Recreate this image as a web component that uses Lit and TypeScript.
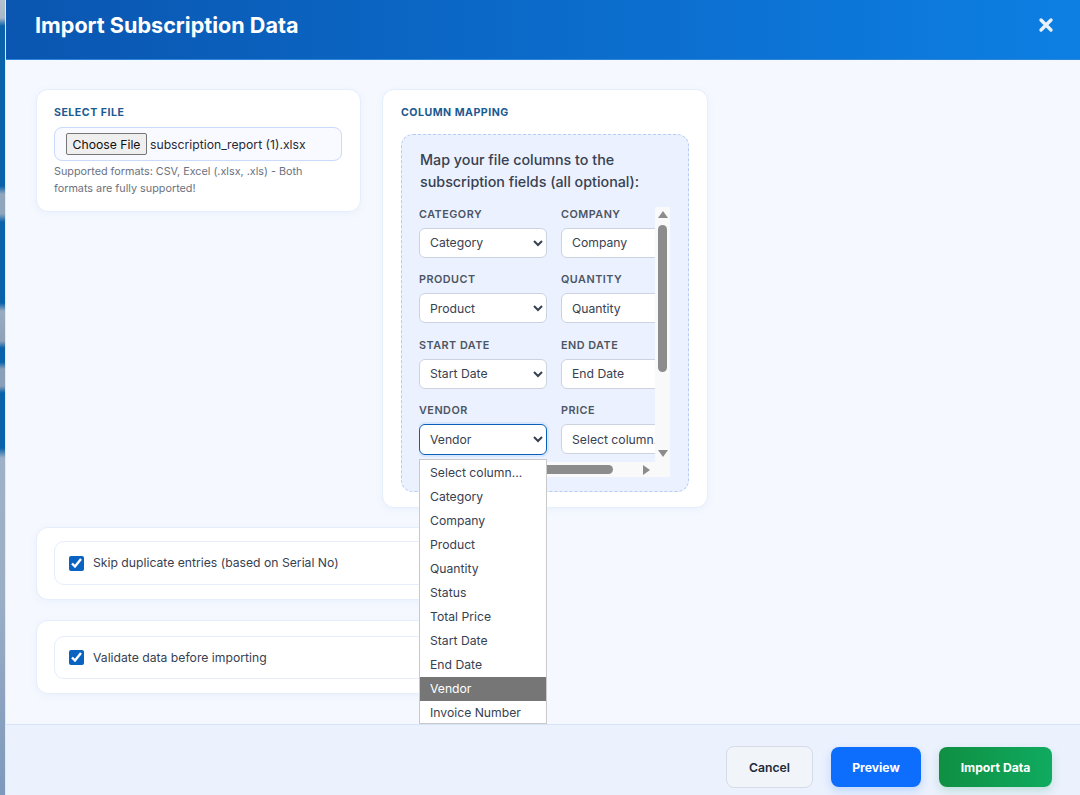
import { LitElement, html, css } from "lit";
import { customElement } from "lit/decorators.js";

const rows: [string, string, string, string][] = [
  ["Category", "Category", "Company", "Company"],
  ["Product", "Product", "Quantity", "Quantity"],
  ["Start Date", "Start Date", "End Date", "End Date"],
  ["Vendor", "Vendor", "Price", "Select column..."],
];
const options = ["Select column...", "Category", "Company", "Product", "Quantity", "Status", "Total Price", "Start Date", "End Date", "Vendor", "Invoice Number"];

@customElement("app-root")
export class AppRoot extends LitElement {
  static styles = css`
    :host { display: flex; height: 795px; width: 1080px; overflow: hidden; font-family: Inter, "Liberation Sans", sans-serif; color: #1f2937; }
    * { box-sizing: border-box; }
    .strip { width: 5px; flex: none; background: linear-gradient(180deg, #b4c0ce 0, #a8b8ca 18px, #0a62ab 26px, #0a62ab 186px, #8fa6bd 194px, #8fa6bd 214px, #0a62ab 222px, #0a62ab 303px, #98abc0 311px, #8fa2b8 341px, #0a62ab 348px, #0a62ab 362px, #8aa0b8 369px, #8aa0b8 386px, #0a62ab 393px, #0a62ab 448px, #9fb1c8 458px, #9aaec6 600px, #7d99bb 795px); }
    .modal { flex: 1; min-width: 0; display: flex; flex-direction: column; background: #f5f8ff; border-left: 1px solid #dfe8f8; }
    .header { height: 60px; flex: none; display: flex; align-items: center; justify-content: space-between; padding: 0 26px 9px 29px; background: linear-gradient(90deg, #0a56b0, #0d7fe3); border-bottom: 1px solid #2c86dc; }
    h1 { margin: 0; font-size: 21.6px; line-height: 30px; font-weight: 700; color: #fff; }
    .close { width: 16px; height: 16px; display: block; }
    .body { flex: 1; min-height: 0; padding: 29px 30px 0 31px; margin-left: -1px; position: relative; display: flex; flex-direction: column; }
    .top { display: flex; gap: 21px; align-items: flex-start; }
    .card { background: #fff; border: 1px solid #e6edfb; border-radius: 12px; box-shadow: 0 2px 8px rgba(13, 90, 180, .05); }
    .file-card { width: 325px; height: 123px; padding: 16px 18px 15px 17px; }
    .map-card { width: 326px; height: 419px; padding: 16px 18px 16px; }
    .title { font-size: 10.6px; line-height: 14px; font-weight: 700; letter-spacing: .5px; color: #1b5a91; text-transform: uppercase; margin-bottom: 7px; }
    .map-card .title { margin-bottom: 14px; }
    .file { height: 34px; display: flex; align-items: center; gap: 3px; padding-left: 11px; border: 1px solid #c9dafa; border-radius: 8px; background: #f8faff; font-size: 12.2px; color: #1f2937; }
    .choose { width: 81px; height: 22px; padding: 0; font: inherit; color: #111; background: #efefef; border: 1px solid #767676; border-radius: 2px; }
    .hint { margin-top: 2px; font-size: 10.8px; line-height: 17px; color: #6b7280; }
    .box { height: 358px; padding: 14px 18px 0; background: #ebf1fe; border: 1px dashed #b5cdf5; border-radius: 12px; }
    .intro { margin: 0 0 14px; font-size: 14.3px; line-height: 22px; font-weight: 500; color: #374151; }
    .scroll { width: 251px; height: 270px; margin-left: -1px; display: grid; grid-template-columns: 236px 15px; grid-template-rows: 255px 15px; }
    .clip { overflow: hidden; }
    .grid { width: 270px; margin-top: .6px; display: grid; grid-template-columns: 128px 128px; column-gap: 14px; }
    .field { height: 65.5px; }
    label { display: block; height: 20px; font-size: 10.8px; line-height: 14px; font-weight: 600; letter-spacing: .5px; text-transform: uppercase; color: #4b5563; }
    select { display: block; width: 128px; height: 30px; padding: 0 0 0 6px; font: 12.2px Inter, "Liberation Sans", sans-serif; color: #374151; background-color: #fff; border: 1px solid #ccd3e0; border-radius: 6px; outline: none; }
    select.focus { height: 31px; border: 1.5px solid #0a5fb8; box-shadow: 0 0 0 2px rgba(13, 110, 253, .08); }
    .vbar { background: #f9f9f9; display: flex; flex-direction: column; align-items: center; padding-top: 4px; }
    .vbar .thumb { width: 9px; height: 147px; margin-top: 7px; border-radius: 5px; background: #8c8c8c; flex: none; }
    .up { width: 0; height: 0; border: 5px solid transparent; border-top: 0; border-bottom: 7px solid #8c8c8c; }
    .down { width: 0; height: 0; margin-top: 78px; border: 5px solid transparent; border-bottom: 0; border-top: 7px solid #8c8c8c; }
    .hbar { background: #f9f9f9; display: flex; align-items: center; }
    .hbar .thumb { width: 190px; height: 9px; margin-left: 4px; border-radius: 5px; background: #8c8c8c; flex: none; }
    .right { width: 0; height: 0; margin-left: 30px; border: 5px solid transparent; border-right: 0; border-left: 7px solid #8c8c8c; }
    .corner { background: #f9f9f9; }
    .option-card { width: 465px; padding: 15px 18px 14px 17px; margin-top: 20px; }
    .option-card.one { margin-top: 19px; padding: 13px 18px 14px 17px; }
    .option { height: 43px; display: flex; align-items: center; gap: 9px; padding-left: 14px; border: 1px solid #e6edfb; border-radius: 10px; font-size: 12.2px; color: #374151; }
    .option-card.one .option { height: 44px; }
    .option-card.one span { margin-top: -1px; }
    input[type=checkbox] { width: 15px; height: 15px; margin: 0; accent-color: #0a63c0; }
    .list { position: absolute; left: 414px; top: 399px; width: 128px; height: 265px; padding-top: 1px; background: #fff; border: 1px solid #c9c9c9; z-index: 2; overflow: hidden; }
    .opt { height: 24px; line-height: 24px; padding-left: 10px; font-size: 12.2px; color: #374151; white-space: nowrap; }
    .opt.sel { background: #767676; color: #fff; }
    .footer { height: 71px; flex: none; display: flex; justify-content: flex-end; align-items: flex-start; gap: 18px; padding: 22px 28px 0 0; background: #ebf1fd; border-top: 1px solid #d7e3f9; position: relative; z-index: 3; }
    .btn { height: 40px; border-radius: 8px; font: 700 12.2px Inter, "Liberation Sans", sans-serif; border: 0; padding: 0; }
    .cancel { width: 87px; height: 42px; margin-top: -1px; background: #f1f4f9; border: 1px solid #d5dbe8; color: #1f2937; font-weight: 600; }
    .preview { width: 90px; background: #0d6efd; color: #fff; box-shadow: 0 4px 10px rgba(13, 110, 253, .2); }
    .import { width: 113px; background: linear-gradient(90deg, #0f8f42, #0fab60); color: #fff; box-shadow: 0 4px 10px rgba(15, 150, 80, .2); }
  `;

  render() {
    return html`
      <div class="strip"></div>
      <div class="modal">
        <header class="header">
          <h1>Import Subscription Data</h1>
          <svg class="close" viewBox="0 0 16 16"><path d="M3 3 L13 13 M13 3 L3 13" stroke="#e8f1fc" stroke-width="3.4" stroke-linecap="round" fill="none"/></svg>
        </header>
        <main class="body">
          <div class="top">
            <section class="card file-card">
              <div class="title">Select file</div>
              <div class="file"><button class="choose">Choose File</button><span>subscription_report (1).xlsx</span></div>
              <div class="hint">Supported formats: CSV, Excel (.xlsx, .xls) - Both formats are fully supported!</div>
            </section>
            <section class="card map-card">
              <div class="title">Column mapping</div>
              <div class="box">
                <p class="intro">Map your file columns to the subscription fields (all optional):</p>
                <div class="scroll">
                  <div class="clip">
                    <div class="grid">
                      ${rows.map((r, i) => html`
                        <div class="field"><label>${r[0]}</label><select class=${i === 3 ? "focus" : ""}><option>${r[1]}</option></select></div>
                        <div class="field"><label>${r[2]}</label><select><option>${r[3]}</option></select></div>
                      `)}
                    </div>
                  </div>
                  <div class="vbar"><div class="up"></div><div class="thumb"></div><div class="down"></div></div>
                  <div class="hbar"><div class="thumb"></div><div class="right"></div></div>
                  <div class="corner"></div>
                </div>
              </div>
            </section>
          </div>
          <section class="card option-card one">
            <div class="option"><input type="checkbox" checked /><span>Skip duplicate entries (based on Serial No)</span></div>
          </section>
          <section class="card option-card">
            <div class="option"><input type="checkbox" checked /><span>Validate data before importing</span></div>
          </section>
          <div class="list">
            ${options.map((o) => html`<div class="opt ${o === "Vendor" ? "sel" : ""}">${o}</div>`)}
          </div>
        </main>
        <footer class="footer">
          <button class="btn cancel">Cancel</button>
          <button class="btn preview">Preview</button>
          <button class="btn import">Import Data</button>
        </footer>
      </div>
    `;
  }
}
